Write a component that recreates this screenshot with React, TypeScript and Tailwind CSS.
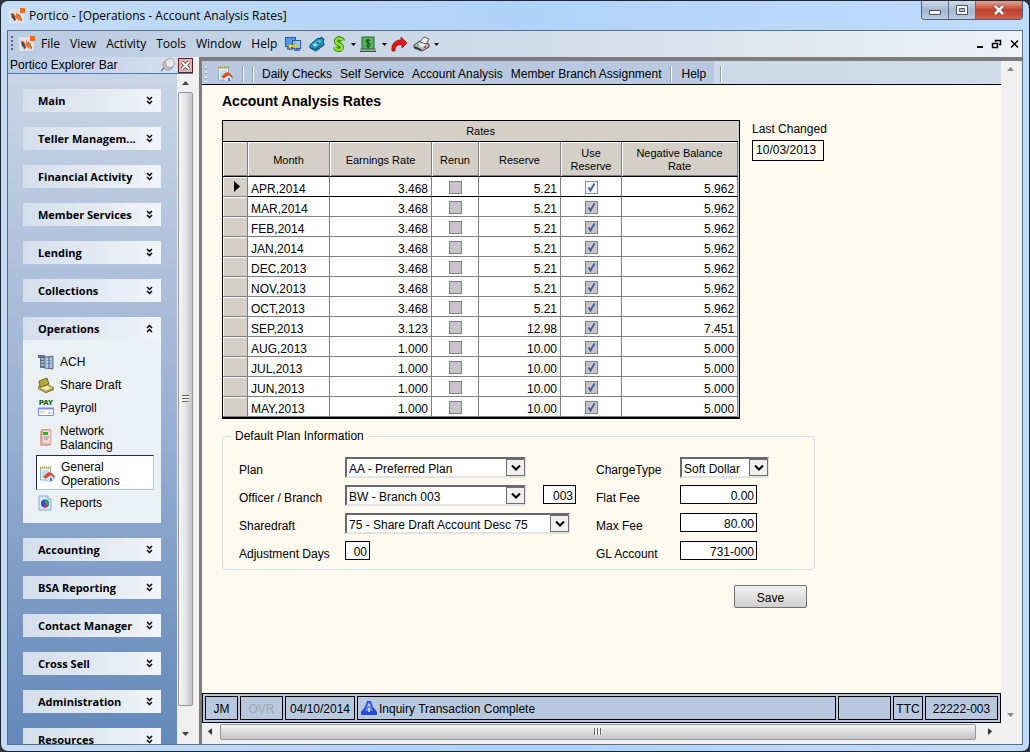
import { FC, ReactNode } from "react";

interface IRate {
  month: string;
  earnings: string;
  reserve: string;
  balance: string;
}

interface IIconProps {
  className?: string;
}

const rates: IRate[] = [
  { month: "APR,2014", earnings: "3.468", reserve: "5.21", balance: "5.962" },
  { month: "MAR,2014", earnings: "3.468", reserve: "5.21", balance: "5.962" },
  { month: "FEB,2014", earnings: "3.468", reserve: "5.21", balance: "5.962" },
  { month: "JAN,2014", earnings: "3.468", reserve: "5.21", balance: "5.962" },
  { month: "DEC,2013", earnings: "3.468", reserve: "5.21", balance: "5.962" },
  { month: "NOV,2013", earnings: "3.468", reserve: "5.21", balance: "5.962" },
  { month: "OCT,2013", earnings: "3.468", reserve: "5.21", balance: "5.962" },
  { month: "SEP,2013", earnings: "3.123", reserve: "12.98", balance: "7.451" },
  { month: "AUG,2013", earnings: "1.000", reserve: "10.00", balance: "5.000" },
  { month: "JUL,2013", earnings: "1.000", reserve: "10.00", balance: "5.000" },
  { month: "JUN,2013", earnings: "1.000", reserve: "10.00", balance: "5.000" },
  { month: "MAY,2013", earnings: "1.000", reserve: "10.00", balance: "5.000" },
];

const topGroups = [
  "Main",
  "Teller Managem...",
  "Financial Activity",
  "Member Services",
  "Lending",
  "Collections",
];

const bottomGroups = [
  "Accounting",
  "BSA Reporting",
  "Contact Manager",
  "Cross Sell",
  "Administration",
  "Resources",
];

const menus = ["File", "View", "Activity", "Tools", "Window", "Help"];

const LogoIcon: FC<IIconProps> = ({ className }) => (
  <svg viewBox="0 0 16 16" className={className}>
    <path d="M0 1h11v5h4v9H0z" fill="#e2e0e0" />
    <path d="M2 5l3 1 2 6-2 1-1-3-1 1z" fill="#4a484c" />
    <path d="M9 6l2 1 2 5-1 1-3-3z" fill="#4a484c" />
    <path d="M4 5l3 3V4l3 4V6l3 7-3-2v2l-4-4z" fill="#f4762a" />
    <rect x="11" y="0" width="5" height="5" fill="#f4681a" />
  </svg>
);

const OperationsIcon: FC<IIconProps> = ({ className }) => (
  <svg viewBox="0 0 16 16" className={className}>
    <path d="M1.500 2h10v12h-10z" fill="#f0f8fc" stroke="#8fb0c4" />
    <path d="M1 1.500h11" stroke="#b39a4a" strokeWidth="2" strokeDasharray="1 1" />
    <path d="M3 5h7M3 7h4M3 9h3M3 11h2" stroke="#8cc4dc" />
    <path d="M6 11l4-3 5 3v3l-4 2-5-2z" fill="#dce8f8" stroke="#7c98c0" strokeWidth=".5" />
    <path d="M4 11l5-5 4 1 3 4-1 1-3-3-5 3.500z" fill="#d8502a" />
    <path d="M11 12h2v3h-2z" fill="#3f78c2" />
  </svg>
);

const MonitorsIcon = () => (
  <svg viewBox="0 0 16 15" className="h-[15px] w-4">
    <path d="M2 10h6v3H2zM9 12h6v2H9z" fill="#5a74b4" />
    <rect x="0.5" y="0.5" width="10" height="9" fill="#4c98f4" stroke="#2c54b4" />
    <rect x="7.500" y="3.500" width="8" height="8" fill="#90ccfc" stroke="#2c54b4" />
    <path d="M3 9l3-3v2h4V6l3 3-3 3v-2H6v2z" fill="#fce428" stroke="#8c7c14" strokeWidth=".5" />
  </svg>
);

const ScannerIcon = () => (
  <svg viewBox="0 0 16 16" className="size-4">
    <path d="M1 9l8-7 2 1 1-2 3 2-1 2 1 4-8 6-6-3z" fill="#1c94bc" stroke="#0c4a6a" />
    <path d="M3 9l7-5 3 1-6 6z" fill="#58c4e4" />
    <path d="M3 12l3 2 6-5" stroke="#0f6690" strokeWidth="1.500" fill="none" />
    <circle cx="9" cy="7" r="1" fill="#0b3f60" />
    <circle cx="6" cy="9" r="1" fill="#d8f4fc" />
  </svg>
);

// green S drawn from strokes with a bar through it
const DollarIcon = () => (
  <svg viewBox="0 0 12 16" className="h-4 w-3" fill="none">
    <path d="M6 0v16" stroke="#4c8c10" strokeWidth="3" />
    <path d="M10 5C9 1 2 2 3 6c1 3 6 2 6 5 0 4-6 4-7 0" stroke="#3c780a" strokeWidth="4" />
    <path d="M10 5C9 1 2 2 3 6c1 3 6 2 6 5 0 4-6 4-7 0" stroke="#8ce42c" strokeWidth="2.500" />
  </svg>
);

const CashIcon = () => (
  <svg viewBox="0 0 16 16" className="size-4">
    <path d="M0 12h16v3.500H0z" fill="#a4a8ac" />
    <rect x="2" y="1" width="12" height="12" fill="#54b45c" stroke="#246a2c" />
    <path d="M10 5C9 3 6 4 6 5c0 2 4 1 4 4 0 2-3 2-4 0M8 3v9" stroke="#0e3c14" fill="none" />
    <path d="M0 15.500h16" stroke="#44484c" />
  </svg>
);

const RedArrowIcon = () => (
  <svg viewBox="0 0 16 16" className="size-4">
    <path d="M1 15C0 8 4 4 10 4V1l6 6-5 5V9C6 8 4 11 4 15z" fill="#e01818" stroke="#8c0808" strokeWidth=".7" />
  </svg>
);

const PrinterIcon = () => (
  <svg viewBox="0 0 17 16" className="h-4 w-[17px]">
    <path d="M1 9l6-4 9 3v3l-7 4-8-3z" fill="#b4b6b8" stroke="#3c3e40" />
    <path d="M3 9l5-3 6 2-5 3z" fill="#eceef0" />
    <path d="M7 6l4-5 5 2-3 5z" fill="#fff" stroke="#55585c" />
    <path d="M2 11l6 3" stroke="#2c2e30" strokeWidth="1.500" />
    <circle cx="12" cy="11" r="1" fill="#d42020" />
    <circle cx="5" cy="9" r="1" fill="#28a83c" />
  </svg>
);

const DropArrow = () => (
  <svg viewBox="0 0 5 3" className="h-[3px] w-[5px]">
    <path d="M0 0h5L2.500 3z" />
  </svg>
);

const AchIcon = () => (
  <svg viewBox="0 0 16 16" className="size-4">
    <path d="M0 1h7v13H2V4H0z" fill="#5c7088" />
    <path d="M6 3l9-1v13l-9-1z" fill="#8ea6c8" stroke="#3c5070" strokeWidth=".7" />
    <path d="M3 5h3M3 8h3M3 11h3M8 5h6M8 8h6M8 11h6M8 13h6" stroke="#e4eefa" />
    <path d="M11 3v12" stroke="#40587c" />
  </svg>
);

const ShareDraftIcon = () => (
  <svg viewBox="0 0 16 16" className="size-4">
    <path d="M0 10l9-3 7 4-8 5z" fill="#c8b85c" stroke="#6c6428" strokeWidth=".7" />
    <path d="M1 4l8-3 2 6-9 3z" fill="#b4ac38" stroke="#5c5818" strokeWidth=".8" />
    <path d="M3 11l6-2 4 2-5 2z" fill="#f4ecb4" />
    <path d="M0 11l8 4 8-4v2l-8 3-8-4z" fill="#888044" />
  </svg>
);

const PayrollIcon = () => (
  <div className="flex h-4 w-4 flex-col items-center">
    <span className="font-['DejaVu_Sans'] text-[7px] leading-[7px] font-bold text-[#0c5c18]">PAY</span>
    <svg viewBox="0 0 16 9" className="h-[9px] w-4">
      <path d="M.5 1.500h15v7H.5z" fill="#fff" stroke="#8888ee" />
      <path d="M0 1.500h16" stroke="#8888ee" strokeWidth="2" />
      <path d="M2 5h5M10 6h4" stroke="#a8a8f4" />
    </svg>
  </div>
);

const NetworkIcon = () => (
  <svg viewBox="0 0 16 18" className="h-[18px] w-4">
    <path d="M2 2l2-2h9v16l-2 1H2z" fill="#d8aca4" />
    <path d="M4 1h9v14H4z" fill="#f2d4cc" stroke="#b88c84" strokeWidth=".6" />
    <rect x="5" y="3" width="5" height="3" fill="#18c028" />
    <path d="M6 8h5M6 10h4" stroke="#9c8cc0" />
  </svg>
);

const ReportsIcon = () => (
  <svg viewBox="0 0 14 16" className="h-4 w-3.5">
    <path d="M1 1h9l3 3v11H1z" fill="#d8e8fa" stroke="#88a8cc" />
    <path d="M10 1v3h3" fill="#fff" stroke="#88a8cc" />
    <circle cx="7" cy="8.500" r="4" fill="#2c50d4" />
    <path d="M7 8.500V4.500a4 4 0 0 1 3 6.500z" fill="#20b038" />
    <path d="M7 8.500l3 2.700a4 4 0 0 1-5 .8z" fill="#d83058" />
  </svg>
);

const PinIcon = () => (
  <svg viewBox="0 0 16 14" className="h-3.5 w-4">
    <path d="M1 13l5-5" stroke="#888" strokeWidth="1.500" />
    <circle cx="8" cy="7" r="5" fill="#c0c0c0" stroke="#999" />
    <circle cx="10" cy="5" r="4.500" fill="#e8e8e8" stroke="#999" strokeWidth=".8" />
  </svg>
);

const Chevrons: FC<{ up?: boolean }> = ({ up }) => (
  <svg viewBox="0 0 7 9" className="h-[9px] w-[7px]" fill="none" stroke="#000" strokeWidth="1.500">
    {up ? (
      <path d="M1 4l2.500-2.500L6 4M1 8l2.500-2.500L6 8" />
    ) : (
      <path d="M1 1l2.500 2.500L6 1M1 5l2.500 2.500L6 5" />
    )}
  </svg>
);

const Separator = () => (
  <div className="h-4 w-0.5 border-r border-l border-r-white border-l-[#94a2b8]" />
);

const Grip = () => (
  <div className="h-4 w-0.5 bg-[repeating-linear-gradient(#56688c_0_2px,transparent_2px_4px)]" />
);

const GroupHeader: FC<{ title: string; open?: boolean }> = ({ title, open }) => (
  <button
    aria-expanded={!!open}
    className="flex h-[23px] w-full shrink-0 items-center justify-between bg-linear-to-r from-[#d4deeb] to-[#f1f4f9] pr-2 pl-[15px] text-left font-['Open_Sans'] text-[11px] font-bold"
  >
    {title}
    <Chevrons up={open} />
  </button>
);

const NavItem: FC<{ icon: ReactNode; className: string; children: ReactNode }> = ({
  icon,
  className,
  children,
}) => (
  <a href="#" className={`flex items-center ${className}`}>
    <span className="flex w-[22px] shrink-0">{icon}</span>
    <span className="leading-[14px]">{children}</span>
  </a>
);

const Sidebar = () => (
  <aside className="flex w-[185px] shrink-0 flex-col">
    <div className="flex h-4 shrink-0 items-center justify-between bg-linear-to-r from-[#b9cbe2] to-[#d9e1ec] pl-0.5">
      <h2>Portico Explorer Bar</h2>
      <div className="flex items-center">
        <PinIcon />
        <button
          aria-label="Close explorer bar"
          className="ml-0.5 flex size-[15px] items-center justify-center border border-[#5c2020] bg-[#dcb4b0]"
        >
          <svg viewBox="0 0 9 9" className="size-[9px]">
            <path d="M1 1l7 7M8 1L1 8" stroke="#444" strokeWidth="3.500" />
            <path d="M1 1l7 7M8 1L1 8" stroke="#fff" strokeWidth="2" />
          </svg>
        </button>
      </div>
    </div>
    <div className="flex min-h-0 flex-1 border-t border-[#5078b0]">
      <nav className="flex min-w-0 flex-1 flex-col gap-[15px] overflow-hidden bg-linear-to-b from-[#c9d5e6] via-[#9bb2d3] to-[#6388b9] pt-[15px] pr-4 pl-[15px]">
        {topGroups.map((title) => (
          <GroupHeader key={title} title={title} />
        ))}
        <div className="shrink-0">
          <GroupHeader title="Operations" open />
          <div className="bg-[#ebf0f4] px-[13px] pt-2.5 pb-2">
            <NavItem icon={<AchIcon />} className="h-[23px] pl-0.5">
              ACH
            </NavItem>
            <NavItem icon={<ShareDraftIcon />} className="h-[23px] pl-0.5">
              Share Draft
            </NavItem>
            <NavItem icon={<PayrollIcon />} className="h-[23px] pl-0.5">
              Payroll
            </NavItem>
            <NavItem icon={<NetworkIcon />} className="h-9 pt-0.5 pl-0.5">
              Network
              <br />
              Balancing
            </NavItem>
            <NavItem
              icon={<OperationsIcon className="size-4" />}
              className="mr-[-6px] h-[35px] border border-t-[#1c2c4c] border-r-[#b0c4dc] border-b-[#b0c4dc] border-l-[#1c2c4c] bg-white pt-0.5 pl-0.5"
            >
              General
              <br />
              Operations
            </NavItem>
            <NavItem icon={<ReportsIcon />} className="h-[25px] pl-0.5">
              Reports
            </NavItem>
          </div>
        </div>
        {bottomGroups.map((title) => (
          <GroupHeader key={title} title={title} />
        ))}
      </nav>
      <div className="flex w-4 flex-col items-center bg-[#efefef]">
        <div className="flex h-[18px] items-center">
          <svg viewBox="0 0 7 4" className="h-1 w-[7px]">
            <path d="M0 4h7L3.500 0z" fill="#444" />
          </svg>
        </div>
        <div className="flex w-[15px] flex-1 items-center justify-center rounded-xs border border-[#979797] bg-linear-to-r from-[#f6f6f6] via-[#e4e4e6] to-[#c4c4c8]">
          <div className="h-2 w-[7px] bg-[repeating-linear-gradient(#666_0_1px,#eee_1px_3px)]" />
        </div>
        <div className="flex h-[38px] items-end pb-2">
          <svg viewBox="0 0 7 4" className="h-1 w-[7px]">
            <path d="M0 0h7L3.500 4z" fill="#444" />
          </svg>
        </div>
      </div>
    </div>
  </aside>
);

const GridCheckbox: FC<{ label: string; checked?: boolean; active?: boolean }> = ({
  label,
  checked,
  active,
}) => (
  <div className="mx-auto grid size-[13px]">
    <input
      type="checkbox"
      aria-label={label}
      defaultChecked={checked}
      className={`col-start-1 row-start-1 size-[13px] appearance-none border ${
        active ? "border-[#8c9098] bg-[#f0f3f8]" : "border-[#768876] bg-[#cbc3cb]"
      }`}
    />
    {checked && (
      <svg viewBox="0 0 13 13" className="pointer-events-none col-start-1 row-start-1 size-[13px]">
        <path d="M3.500 6.500L5.500 9.500L9.500 2.500" fill="none" stroke="#3c5e9c" strokeWidth="1.800" />
      </svg>
    )}
  </div>
);

const headCell =
  "border-r border-b border-r-[#808080] border-b-black bg-[#d4d0c8] pt-0.5 text-[11px] leading-[13px] font-normal shadow-[inset_1px_1px_#fff,inset_0_-1px_#808080]";

const RatesTable = () => (
  <table className="w-[518px] table-fixed border-separate border-spacing-0 border border-b-2 border-black bg-[#c8d4e4] pr-px">
    <colgroup>
      <col className="w-[25px]" />
      <col className="w-[82px]" />
      <col className="w-[102px]" />
      <col className="w-[47px]" />
      <col className="w-[82px]" />
      <col className="w-[61px]" />
      <col className="w-[116px]" />
    </colgroup>
    <thead>
      <tr className="h-[21px]">
        <th colSpan={7} className="border-b border-black bg-[#d4d0c8] text-[11px] font-normal">
          Rates
        </th>
      </tr>
      <tr className="h-[35px]">
        <th className={headCell} />
        <th className={headCell}>Month</th>
        <th className={headCell}>Earnings Rate</th>
        <th className={headCell}>Rerun</th>
        <th className={headCell}>Reserve</th>
        <th className={headCell}>
          Use
          <br />
          Reserve
        </th>
        <th className={headCell}>
          Negative Balance
          <br />
          Rate
        </th>
      </tr>
    </thead>
    <tbody>
      {rates.map((rate, index) => {
        const cell = `border-r border-b border-r-[#808080] bg-white leading-[14px] ${
          index === 0 ? "border-b-black" : "border-b-[#808080]"
        }`;

        return (
          <tr key={rate.month} className="h-5">
            <th className="border-r border-b border-[#808080] bg-[#d4d0c8] shadow-[inset_1px_1px_#fff]">
              {index === 0 && (
                <svg viewBox="0 0 6 11" className="ml-[11px] h-[11px] w-1.5">
                  <path d="M0 0l6 5.500L0 11z" />
                </svg>
              )}
            </th>
            <td className={`${cell} pt-[5px] pl-[3px]`}>{rate.month}</td>
            <td className={`${cell} pt-[5px] pr-[3px] text-right`}>{rate.earnings}</td>
            <td className={`${cell} pt-0.5`}>
              <GridCheckbox label={`Rerun ${rate.month}`} />
            </td>
            <td className={`${cell} pt-[5px] pr-[3px] text-right`}>{rate.reserve}</td>
            <td className={`${cell} pt-0.5`}>
              <GridCheckbox label={`Use reserve ${rate.month}`} checked active={index === 0} />
            </td>
            <td className={`${cell} pt-[5px] pr-[3px] text-right`}>{rate.balance}</td>
          </tr>
        );
      })}
    </tbody>
  </table>
);

const SelectBox: FC<{ id: string; value: string; className: string }> = ({
  id,
  value,
  className,
}) => (
  <div className={`grid h-[21px] ${className}`}>
    <select
      id={id}
      className="col-start-1 row-start-1 h-[21px] w-full appearance-none border-2 border-t-[#696969] border-r-[#e3e3e3] border-b-[#e3e3e3] border-l-[#696969] bg-white pt-0.5 pl-0.5"
    >
      <option>{value}</option>
    </select>
    <span className="pointer-events-none col-start-1 row-start-1 mr-px flex h-[17px] w-[19px] items-center justify-center self-center justify-self-end border border-[#707070] bg-[#f0f0f0]">
      <svg viewBox="0 0 10 6" className="h-1.5 w-2.5">
        <path d="M1 .5l4 4 4-4" fill="none" stroke="#000" strokeWidth="2" />
      </svg>
    </span>
  </div>
);

const inputBox = "h-[19px] border border-black bg-white pt-0.5 pr-0.5 text-right";

const PlanForm = () => (
  <fieldset className="mt-2.5 w-[593px] rounded-sm border border-[#d2deea] px-4">
    <legend className="-ml-2 px-1 leading-[14px]">Default Plan Information</legend>
    <div className="flex pt-3.5">
      <div className="grid w-[357px] auto-rows-[28px] grid-cols-[106px_1fr] items-start">
        <label htmlFor="plan" className="pt-[5px]">
          Plan
        </label>
        <SelectBox id="plan" value="AA - Preferred Plan" className="w-[181px]" />
        <label htmlFor="officer" className="pt-[5px]">
          Officer / Branch
        </label>
        <div className="flex gap-[17px]">
          <SelectBox id="officer" value="BW - Branch 003" className="w-[181px]" />
          <input aria-label="Branch" defaultValue="003" className={`${inputBox} w-[33px]`} />
        </div>
        <label htmlFor="sharedraft" className="pt-[5px]">
          Sharedraft
        </label>
        <SelectBox id="sharedraft" value="75 - Share Draft Account Desc 75" className="w-[225px]" />
        <label htmlFor="days" className="pt-[5px]">
          Adjustment Days
        </label>
        <input id="days" defaultValue="00" className={`${inputBox} w-[25px]`} />
      </div>
      <div className="grid auto-rows-[28px] grid-cols-[84px_1fr] items-start">
        <label htmlFor="charge" className="pt-[5px]">
          ChargeType
        </label>
        <SelectBox id="charge" value="Soft Dollar" className="w-[89px]" />
        <label htmlFor="flat" className="pt-[5px]">
          Flat Fee
        </label>
        <input id="flat" defaultValue="0.00" className={`${inputBox} w-[77px]`} />
        <label htmlFor="max" className="pt-[5px]">
          Max Fee
        </label>
        <input id="max" defaultValue="80.00" className={`${inputBox} w-[77px]`} />
        <label htmlFor="gl" className="pt-[5px]">
          GL Account
        </label>
        <input id="gl" defaultValue="731-000" className={`${inputBox} w-[77px]`} />
      </div>
    </div>
  </fieldset>
);

const Toolbar = () => (
  <div className="flex h-[24px] shrink-0 border-b border-black bg-linear-to-r from-[#c6d4e7] to-[#d0dce9]">
    <div className="flex items-center gap-2 bg-[#b8c9df] pt-0.5 pr-2 pl-[3px]">
      <div className="h-4 w-0.5 bg-[repeating-linear-gradient(#dfe8f4_0_2px,#94a2b8_2px_3px,transparent_3px_5px)]" />
      <OperationsIcon className="mr-px ml-0.5 size-4" />
      <Separator />
      <Separator />
      <button>Daily Checks</button>
      <button>Self Service</button>
      <button>Account Analysis</button>
      <button>Member Branch Assignment</button>
      <Separator />
      <button className="ml-0.5">Help</button>
    </div>
    <div className="flex items-center pt-0.5 pl-1.5">
      <Separator />
    </div>
  </div>
);

const statusCell = "flex h-6 items-center justify-center border border-black pt-0.5";

const StatusBar = () => (
  <footer className="flex h-[30px] shrink-0 gap-0.5 border border-black bg-[#b8c9df] p-0.5">
    <div className={`${statusCell} w-[33px]`}>JM</div>
    <div className={`${statusCell} w-[43px] text-[#a0a4ac]`}>OVR</div>
    <div className={`${statusCell} w-[70px]`}>04/10/2014</div>
    <div className="flex h-6 flex-1 items-center gap-0.5 border border-black pl-[3px]">
      <svg viewBox="0 0 16 16" className="size-4">
        <path d="M6 1h4l2 6 4 5v3H0v-3l4-5z" fill="#2448d4" />
        <path d="M7 2h2l3 9H4z" fill="#6088f0" />
        <path d="M8 4v2M8 8v4" stroke="#dce8ff" strokeWidth="1.500" />
      </svg>
      <span className="pt-0.5">Inquiry Transaction Complete</span>
    </div>
    <div className={`${statusCell} w-[53px]`} />
    <div className={`${statusCell} w-[30px]`}>TTC</div>
    <div className={`${statusCell} w-[73px]`}>22222-003</div>
  </footer>
);

const Workspace = () => (
  <main className="ml-1.5 flex min-w-0 flex-1 flex-col border-t-4 border-l-3 border-[#7c7c7c] bg-[#f0f0f0] pr-[3px] pb-1">
    <div className="flex min-h-0 flex-1">
      <div className="flex min-w-0 flex-1 flex-col bg-[#fffaf0]">
        <Toolbar />
        <div className="min-h-0 flex-1 overflow-hidden pt-[7px] pl-5">
          <h1 className="text-[14px] leading-[18px] font-bold">Account Analysis Rates</h1>
          <div className="flex items-start gap-3 pt-2.5">
            <RatesTable />
            <div className="flex flex-col gap-0.5">
              <label htmlFor="changed" className="leading-[18px]">
                Last Changed
              </label>
              <input
                id="changed"
                readOnly
                defaultValue="10/03/2013"
                className="h-[21px] w-[72px] border border-black bg-transparent pb-0.5 pl-[3px]"
              />
            </div>
          </div>
          <PlanForm />
          <div className="flex w-[585px] justify-end pt-[15px]">
            <button className="h-[23px] w-[73px] rounded-xs border border-[#707070] bg-linear-to-b from-[#f2f2f2] to-[#cfcfcf] pt-0.5">
              Save
            </button>
          </div>
        </div>
        <StatusBar />
      </div>
      <div className="flex w-[18px] flex-col items-center justify-between bg-[#f0f0f0] py-1.5">
        <svg viewBox="0 0 7 4" className="h-1 w-[7px]">
          <path d="M0 4h7L3.500 0z" fill="#888" />
        </svg>
        <svg viewBox="0 0 7 4" className="h-1 w-[7px]">
          <path d="M0 0h7L3.500 4z" fill="#888" />
        </svg>
      </div>
    </div>
    <div className="flex h-[17px] shrink-0 items-center pr-[23px] pl-1.5">
      <svg viewBox="0 0 4 7" className="h-[7px] w-1">
        <path d="M4 0v7L0 3.500z" fill="#333" />
      </svg>
      <div className="mx-2 flex h-4 flex-1 items-center justify-center rounded-xs border border-[#979797] bg-linear-to-b from-[#f4f4f4] via-[#dcdcde] to-[#c4c4c8]">
        <div className="h-[7px] w-2 bg-[repeating-linear-gradient(90deg,#666_0_1px,#eee_1px_3px)]" />
      </div>
      <svg viewBox="0 0 4 7" className="mx-1 h-[7px] w-1">
        <path d="M0 0v7l4-3.500z" fill="#333" />
      </svg>
    </div>
  </main>
);

const TitleBar = () => (
  <header className="flex h-[29px] shrink-0 justify-between">
    <div className="flex items-center gap-1 pl-0.5 font-['Open_Sans'] text-[12px]">
      <LogoIcon className="size-4" />
      Portico - [Operations - Account Analysis Rates]
    </div>
    <div className="flex h-[19px] overflow-hidden rounded-b-sm border border-t-0 border-[#4c5c74]">
      <button
        aria-label="Minimize"
        className="flex w-[27px] items-center justify-center border-r border-[#5c6c84] bg-linear-to-b from-[#cfdcec] via-[#a4b6ce] to-[#bccde2]"
      >
        <svg viewBox="0 0 12 5" className="mt-1 h-[5px] w-3">
          <path d="M.5 .5h11v4H.5z" fill="#fff" stroke="#4c5468" />
        </svg>
      </button>
      <button
        aria-label="Maximize"
        className="flex w-[27px] items-center justify-center border-r border-[#5c6c84] bg-linear-to-b from-[#cfdcec] via-[#a4b6ce] to-[#bccde2]"
      >
        <svg viewBox="0 0 12 10" className="h-2.5 w-3">
          <path d="M.5 .5h11v9H.5z" fill="#fff" stroke="#4c5468" />
          <path d="M3.500 3.500h5v3h-5z" fill="#b4c4d8" stroke="#4c5468" />
        </svg>
      </button>
      <button
        aria-label="Close"
        className="flex w-[46px] items-center justify-center bg-linear-to-b from-[#e0a498] via-[#c0402c] to-[#cc6048]"
      >
        <svg viewBox="0 0 12 10" className="h-2.5 w-3">
          <path d="M2 1l8 8M10 1L2 9" stroke="#5c4450" strokeWidth="4" />
          <path d="M2 1l8 8M10 1L2 9" stroke="#fff" strokeWidth="2.500" />
        </svg>
      </button>
    </div>
  </header>
);

const MenuBar = () => (
  <div className="flex h-[26px] shrink-0 items-center justify-between bg-linear-to-r from-[#b9cbe2] via-[#d0dce9] to-[#eef1f6] pr-[3px] pl-[3px]">
    <div className="flex items-center">
      <Grip />
      <LogoIcon className="mr-1.5 ml-1.5 size-4" />
      <nav className="flex gap-2.5 font-['Open_Sans'] text-[12px]">
        {menus.map((menu) => (
          <button key={menu}>{menu}</button>
        ))}
      </nav>
      <div className="flex items-center gap-2 pl-2">
        <button aria-label="Connections">
          <MonitorsIcon />
        </button>
        <button aria-label="Scanner">
          <ScannerIcon />
        </button>
        <button aria-label="Deposits" className="flex items-center gap-1.5">
          <DollarIcon />
          <DropArrow />
        </button>
        <button aria-label="Cash" className="-ml-1 flex items-center gap-1.5">
          <CashIcon />
          <DropArrow />
        </button>
        <button aria-label="Forward" className="-ml-1">
          <RedArrowIcon />
        </button>
        <button aria-label="Print" className="-ml-0.5 flex items-center gap-1">
          <PrinterIcon />
          <DropArrow />
        </button>
      </div>
    </div>
    <svg viewBox="0 0 43 10" className="h-2.5 w-[43px]" fill="none" stroke="#000">
      <path d="M1 8h6" strokeWidth="2" />
      <path d="M19.500 3V1.500h5v4H23M19 1.500h6" strokeWidth="1.500" />
      <path d="M16.500 4.500h5v4h-5zM16 4.500h6" strokeWidth="1.500" />
      <path d="M35 1.500l7 7M42 1.500l-7 7" strokeWidth="1.500" />
    </svg>
  </div>
);

export default function App() {
  return (
    <div className="h-screen overflow-hidden bg-[#30343c] font-['Liberation_Sans',sans-serif] text-[12px] leading-[16px] text-black">
      <div className="flex h-full flex-col rounded-lg border border-[#20242c] bg-linear-to-r from-[#c4dcf6] via-[#b0d2f8] to-[#c0dcfc] px-1.5 pb-1.5">
        <TitleBar />
        <div className="flex min-h-0 flex-1 flex-col border border-[#5c7088] bg-[#f0f0f0]">
          <MenuBar />
          <div className="flex min-h-0 flex-1">
            <Sidebar />
            <Workspace />
          </div>
        </div>
      </div>
    </div>
  );
}
